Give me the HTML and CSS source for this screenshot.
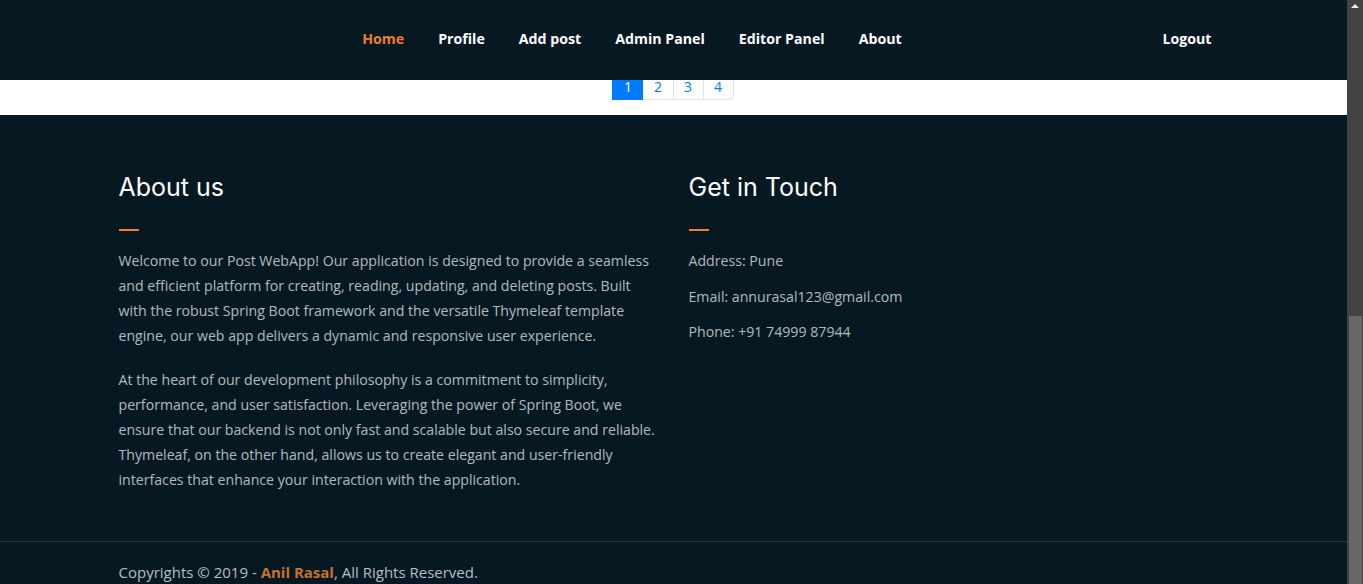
FILE: index.html
```html
<!DOCTYPE html>
<html lang="en">
<head>
<meta charset="utf-8">
<title>Post WebApp</title>
<link rel="stylesheet" href="styles.css">
</head>
<body>
<div class="page">
  <header class="navbar">
    <div class="container nav-inner">
      <ul class="nav-main">
        <li><a class="nav-link active" href="#">Home</a></li>
        <li><a class="nav-link" href="#">Profile</a></li>
        <li><a class="nav-link" href="#">Add post</a></li>
        <li><a class="nav-link" href="#">Admin Panel</a></li>
        <li><a class="nav-link" href="#">Editor Panel</a></li>
        <li><a class="nav-link" href="#">About</a></li>
      </ul>
      <ul class="nav-right">
        <li><a class="nav-link" href="#">Logout</a></li>
      </ul>
    </div>
  </header>

  <section class="posts">
    <ul class="pagination">
      <li><a class="page-link active" href="#">1</a></li>
      <li><a class="page-link" href="#">2</a></li>
      <li><a class="page-link" href="#">3</a></li>
      <li><a class="page-link last" href="#">4</a></li>
    </ul>
  </section>

  <footer class="footer">
    <div class="container-wide footer-top">
      <div class="col">
        <h4 class="footer-title">About us</h4>
        <p class="footer-text">Welcome to our Post WebApp! Our application is designed to provide a seamless and efficient platform for creating, reading, updating, and deleting posts. Built with the robust Spring Boot framework and the versatile Thymeleaf template engine, our web app delivers a dynamic and responsive user experience.</p>
        <p class="footer-text">At the heart of our development philosophy is a commitment to simplicity, performance, and user satisfaction. Leveraging the power of Spring Boot, we ensure that our backend is not only fast and scalable but also secure and reliable. Thymeleaf, on the other hand, allows us to create elegant and user-friendly interfaces that enhance your interaction with the application.</p>
      </div>
      <div class="col">
        <h4 class="footer-title">Get in Touch</h4>
        <p class="contact">Address: Pune</p>
        <p class="contact">Email: annurasal123@gmail.com</p>
        <p class="contact">Phone: +91 74999 87944</p>
      </div>
    </div>
    <div class="footer-bottom">
      <div class="container">
        <p class="copyright">Copyrights © 2019 - <a href="#" class="author">Anil Rasal</a>, All Rights Reserved.</p>
      </div>
    </div>
  </footer>
</div>
<div class="scrollbar">
  <div class="scroll-arrow"></div>
  <div class="scroll-track">
    <div class="scroll-thumb"></div>
  </div>
</div>
</body>
</html>
```

FILE: styles.css
```css
* { box-sizing: border-box; }

html, body {
  margin: 0;
  padding: 0;
  height: 584px;
  overflow: hidden;
}

body {
  display: flex;
  font-family: "Open Sans", "Liberation Sans", sans-serif;
  background: #061923;
}

.page {
  flex: 1;
  display: flex;
  flex-direction: column;
  min-width: 0;
  height: 584px;
  overflow: hidden;
}

.container {
  width: 1140px;
  margin: 0 auto;
  padding: 0 15px;
}

.container-wide {
  width: 1140px;
  margin: 0 auto;
}

/* Navbar */
.navbar {
  flex: 0 0 80px;
  height: 80px;
  background: #061923;
  position: relative;
  z-index: 2;
}

.nav-inner {
  display: flex;
  align-items: center;
  height: 80px;
  padding-bottom: 2px;
}

.nav-main, .nav-right {
  list-style: none;
  margin: 0;
  padding: 0;
  display: flex;
}

.nav-main { margin: 0 auto; }

.nav-link {
  display: block;
  padding: 0 17px;
  color: #ffffff;
  font-weight: 700;
  font-size: 14.2px;
  line-height: 20px;
  text-decoration: none;
}

.nav-link.active { color: #f37f28; }

/* Posts / pagination */
.posts {
  flex: 0 0 35px;
  height: 35px;
  background: #ffffff;
  display: flex;
  flex-direction: column;
  justify-content: flex-end;
  align-items: center;
  padding-bottom: 15px;
  overflow: hidden;
}

.pagination {
  list-style: none;
  margin: 0;
  padding: 0;
  display: flex;
}

.page-link {
  display: block;
  padding: 6px 10.5px 2px;
  margin-left: -1px;
  font-size: 14px;
  line-height: 21px;
  color: #007bff;
  background: #fff;
  border: 1px solid #dee2e6;
  text-decoration: none;
}

.page-link.active {
  background: #007bff;
  border-color: #007bff;
  color: #fff;
  position: relative;
  z-index: 1;
}

.page-link.last { border-radius: 0 0 4px 0; }

/* Footer */
.footer {
  flex: 1;
  background: #061923;
  display: flex;
  flex-direction: column;
}

.footer-top {
  display: flex;
  padding-top: 57px;
  padding-bottom: 30px;
}

.col {
  flex: 0 0 570px;
  width: 570px;
  padding: 0 15px;
}

.footer-title {
  margin: 0;
  font-family: "Inter", "Open Sans", sans-serif;
  font-weight: 400;
  font-size: 25px;
  line-height: 30px;
  color: #ffffff;
}

.footer-title::after {
  content: "";
  display: block;
  width: 20px;
  height: 2px;
  background: #f37f28;
  margin-top: 27px;
  margin-bottom: 17px;
}

.footer-text {
  margin: 0 0 19px;
  font-size: 14.15px;
  line-height: 25px;
  color: rgba(255, 255, 255, 0.7);
}

.contact {
  margin: 0 0 10.5px;
  font-size: 14.15px;
  line-height: 25px;
  color: rgba(255, 255, 255, 0.7);
}

.footer-bottom {
  border-top: 1px solid rgba(255, 255, 255, 0.12);
  padding-top: 17px;
}

.copyright {
  margin: 0;
  font-size: 15px;
  line-height: 26px;
  color: rgba(255, 255, 255, 0.72);
}

.author {
  color: #c8712a;
  font-weight: 700;
  text-decoration: none;
}

/* Scrollbar */
.scrollbar {
  flex: 0 0 16px;
  width: 16px;
  height: 584px;
  background: #434343;
  display: flex;
  flex-direction: column;
}

.scroll-arrow {
  flex: 0 0 16px;
  display: flex;
  justify-content: center;
  padding-top: 4px;
}

.scroll-arrow::before {
  content: "";
  width: 0;
  height: 0;
  border-left: 4px solid transparent;
  border-right: 4px solid transparent;
  border-bottom: 4px solid #f0f0f0;
}

.scroll-track {
  flex: 1;
  display: flex;
  flex-direction: column;
  justify-content: flex-end;
  padding: 0 1px 0 2px;
}

.scroll-thumb {
  height: 268px;
  background: #686868;
}
```
